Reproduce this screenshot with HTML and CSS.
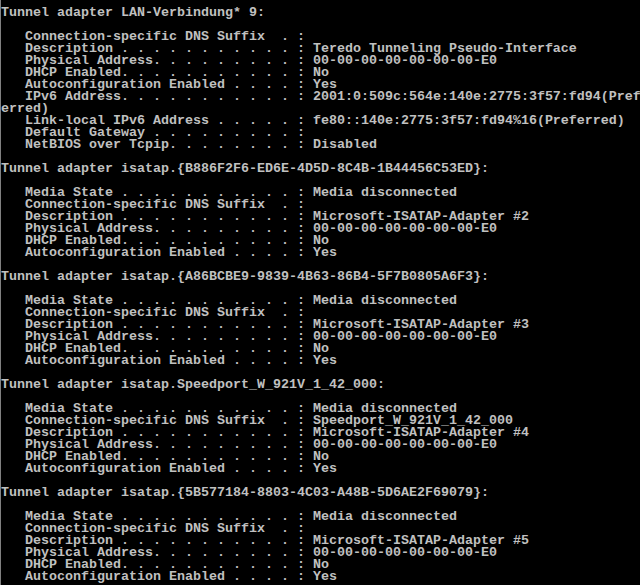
FILE: index.html
```
<!DOCTYPE html>
<html>
<head>
<meta charset="utf-8">
<link rel="stylesheet" href="styles.css">
</head>
<body>
<pre class="console">Tunnel adapter LAN-Verbindung* 9:

   Connection-specific DNS Suffix  . :
   Description . . . . . . . . . . . : Teredo Tunneling Pseudo-Interface
   Physical Address. . . . . . . . . : 00-00-00-00-00-00-00-E0
   DHCP Enabled. . . . . . . . . . . : No
   Autoconfiguration Enabled . . . . : Yes
   IPv6 Address. . . . . . . . . . . : 2001:0:509c:564e:140e:2775:3f57:fd94(Pref
erred)
   Link-local IPv6 Address . . . . . : fe80::140e:2775:3f57:fd94%16(Preferred)
   Default Gateway . . . . . . . . . :
   NetBIOS over Tcpip. . . . . . . . : Disabled

Tunnel adapter isatap.{B886F2F6-ED6E-4D5D-8C4B-1B44456C53ED}:

   Media State . . . . . . . . . . . : Media disconnected
   Connection-specific DNS Suffix  . :
   Description . . . . . . . . . . . : Microsoft-ISATAP-Adapter #2
   Physical Address. . . . . . . . . : 00-00-00-00-00-00-00-E0
   DHCP Enabled. . . . . . . . . . . : No
   Autoconfiguration Enabled . . . . : Yes

Tunnel adapter isatap.{A86BCBE9-9839-4B63-86B4-5F7B0805A6F3}:

   Media State . . . . . . . . . . . : Media disconnected
   Connection-specific DNS Suffix  . :
   Description . . . . . . . . . . . : Microsoft-ISATAP-Adapter #3
   Physical Address. . . . . . . . . : 00-00-00-00-00-00-00-E0
   DHCP Enabled. . . . . . . . . . . : No
   Autoconfiguration Enabled . . . . : Yes

Tunnel adapter isatap.Speedport_W_921V_1_42_000:

   Media State . . . . . . . . . . . : Media disconnected
   Connection-specific DNS Suffix  . : Speedport_W_921V_1_42_000
   Description . . . . . . . . . . . : Microsoft-ISATAP-Adapter #4
   Physical Address. . . . . . . . . : 00-00-00-00-00-00-00-E0
   DHCP Enabled. . . . . . . . . . . : No
   Autoconfiguration Enabled . . . . : Yes

Tunnel adapter isatap.{5B577184-8803-4C03-A48B-5D6AE2F69079}:

   Media State . . . . . . . . . . . : Media disconnected
   Connection-specific DNS Suffix  . :
   Description . . . . . . . . . . . : Microsoft-ISATAP-Adapter #5
   Physical Address. . . . . . . . . : 00-00-00-00-00-00-00-E0
   DHCP Enabled. . . . . . . . . . . : No
   Autoconfiguration Enabled . . . . : Yes</pre>
</body>
</html>
```
FILE: styles.css
```
html, body {
  margin: 0;
  padding: 0;
  background: #000;
  height: 100%;
  overflow: hidden;
}
body {
  border-left: 1px solid #808080;
  box-sizing: border-box;
}
.console {
  margin: 0;
  padding: 7px 0 0 0;
  font-family: "Liberation Mono", "DejaVu Sans Mono", monospace;
  font-weight: bold;
  font-size: 13.33px;
  line-height: 12px;
  color: #c0c0c0;
  white-space: pre;
}
```
